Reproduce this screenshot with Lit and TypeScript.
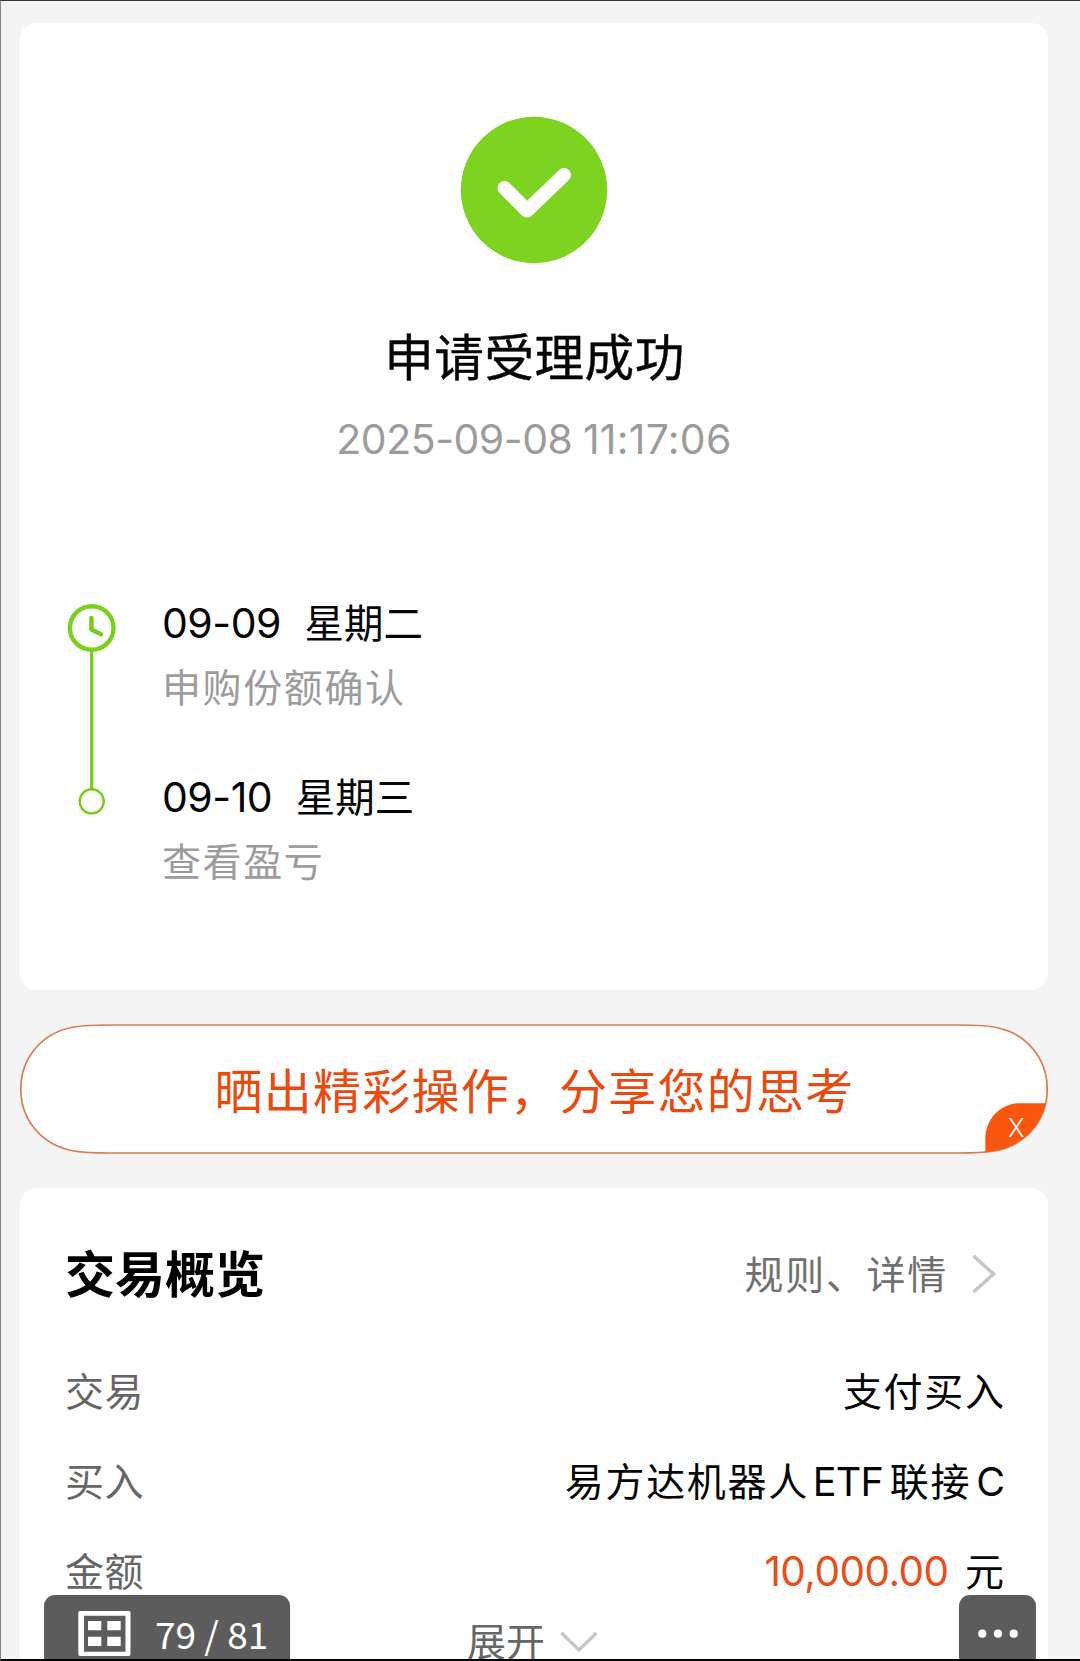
import { LitElement, html, css, svg } from "lit";
import { customElement } from "lit/decorators.js";

const STEPS = [
  { date: "09-09", day: "星期二", note: "申购份额确认" },
  { date: "09-10", day: "星期三", note: "查看盈亏" },
];

const PILL =
  "M90 1C75 1 64 1.3 54 3C22 8.5 .8 34 .8 65S22 121.5 54 127C64 128.7 75 129 90 129H938C953 129 964 128.7 974 127C1006 121.5 1027.2 96 1027.2 65S1006 8.5 974 3C964 1.3 953 1 938 1Z";

@customElement("app-root")
export class AppRoot extends LitElement {
  static styles = css`
    :host {
      display: block;
      font-family: Inter, "Noto Sans CJK SC", sans-serif;
      color: #050505;
    }
    * {
      box-sizing: border-box;
    }
    svg {
      display: block;
      flex: none;
    }
    .page {
      position: relative;
      height: 1661px;
      overflow: hidden;
      background: #f4f4f4;
      border-top: 1px solid #38343a;
      border-left: 1px solid #858585;
      border-bottom: 2px solid #000;
      padding: 22px 32px 0 19px;
      display: flex;
      flex-direction: column;
      white-space: nowrap;
    }
    .card {
      background: #fff;
      border-radius: 17px;
      flex: none;
    }
    .result {
      height: 967px;
      padding-top: 93px;
      display: flex;
      flex-direction: column;
      align-items: center;
    }
    .headline {
      margin-top: 64px;
      padding-left: 1px;
      font-size: 49.6px;
      letter-spacing: 0.5px;
      line-height: 60px;
      -webkit-text-stroke: 0.4px currentColor;
    }
    .time {
      margin-top: 26px;
      display: flex;
      gap: 10.5px;
      font-size: 41px;
      line-height: 50px;
      color: #9c9c9c;
    }
    .ymd {
      letter-spacing: -0.5px;
    }
    .hms {
      letter-spacing: 0.25px;
    }
    .timeline {
      align-self: stretch;
      margin-top: 134px;
      padding-left: 46px;
      display: flex;
      gap: 46px;
    }
    .steps {
      display: flex;
      flex-direction: column;
      gap: 59.5px;
    }
    .when {
      display: flex;
      gap: 23.5px;
      font-size: 41px;
      letter-spacing: -0.5px;
      line-height: 50px;
    }
    .day {
      font-size: 39.5px;
      letter-spacing: 0;
      padding-top: 1px;
      margin-bottom: -1px;
    }
    .note {
      margin-top: 15px;
      margin-bottom: -1px;
      font-size: 39px;
      letter-spacing: 1.6px;
      line-height: 50px;
      color: #9c9c9c;
    }
    .share {
      position: relative;
      flex: none;
      height: 130px;
      margin: 34px 0;
      display: flex;
      align-items: center;
      justify-content: center;
      font-size: 48px;
      letter-spacing: 1.23px;
      line-height: 60px;
      color: #e84a10;
    }
    .outline {
      position: absolute;
      inset: 0;
    }
    .label {
      position: relative;
      padding-top: 5px;
      padding-left: 1px;
    }
    .close {
      position: absolute;
      left: 988px;
      top: 89px;
      font-size: 25px;
      line-height: 30px;
      letter-spacing: 0;
      font-weight: 300;
      color: #fff;
    }
    .overview {
      height: 500px;
      padding: 57px 44px 0 45px;
    }
    .head,
    .row,
    .more,
    .link,
    .value {
      display: flex;
      align-items: center;
    }
    .head,
    .row {
      justify-content: space-between;
    }
    .title {
      font-size: 50px;
      line-height: 60px;
      font-weight: 700;
      color: #000;
    }
    .link {
      gap: 24px;
      padding-right: 8px;
      font-size: 39px;
      letter-spacing: 1.7px;
      line-height: 50px;
      color: #707070;
    }
    .rows {
      margin-top: 61.5px;
      display: flex;
      flex-direction: column;
      gap: 40px;
      font-size: 39px;
      line-height: 50px;
    }
    .name {
      color: #666;
      letter-spacing: 0.4px;
    }
    .value {
      letter-spacing: 1.7px;
      margin-right: -1.7px;
    }
    .latin {
      font-size: 39.5px;
      letter-spacing: -0.7px;
      margin: 0 6.5px 0 3.8px;
    }
    .tail {
      font-size: 39.5px;
      margin: 0 -1px 0 5px;
    }
    .amount {
      font-size: 40.5px;
      letter-spacing: -0.55px;
      color: #e5501c;
      margin-right: 16.5px;
    }
    .more {
      margin-top: 27px;
      padding-left: 402px;
      gap: 15px;
      font-size: 39px;
      line-height: 36px;
      color: #666;
    }
    .dock {
      position: absolute;
      top: 1594px;
      height: 66px;
      background: #5c5c5c;
      border-radius: 11px 11px 0 0;
      display: flex;
      color: #fff;
    }
    .pager {
      left: 43px;
      width: 246px;
      padding: 16px 0 0 34px;
      gap: 24px;
      font-family: "Noto Sans CJK SC", sans-serif;
      font-size: 37px;
      line-height: 44px;
    }
    .menu {
      left: 958px;
      width: 77px;
      justify-content: center;
      padding-top: 34px;
    }
  `;

  render() {
    return html`
      <div class="page">
        <section class="card result">
          <svg width="148" height="148" viewBox="0 0 148 148">
            <circle cx="74" cy="74" r="73.2" fill="#7ed321" />
            <path
              d="M44.5 72L67 94.5L104 59"
              fill="none"
              stroke="#fff"
              stroke-width="14"
              stroke-linecap="round"
              stroke-linejoin="round"
            />
          </svg>
          <div class="headline">申请受理成功</div>
          <div class="time">
            <span class="ymd">2025-09-08</span><span class="hms">11:17:06</span>
          </div>
          <div class="timeline">
            <svg width="50" height="220" viewBox="0 0 50 220">
              <g fill="none" stroke="#76cb1e">
                <path d="M25.7 53V191" stroke-width="3.2" />
                <circle cx="25.7" cy="30" r="21.8" stroke-width="4.4" stroke="#7ad01c" />
                <path
                  d="M25.4 20V31.5L35 36.2"
                  stroke-width="4.4"
                  stroke-linecap="round"
                  stroke-linejoin="round"
                />
                <circle cx="25.7" cy="203.3" r="12" stroke-width="2.5" />
              </g>
            </svg>
            <div class="steps">
              ${STEPS.map(
                (s) => html`<div>
                  <div class="when"><span>${s.date}</span><span class="day">${s.day}</span></div>
                  <div class="note">${s.note}</div>
                </div>`
              )}
            </div>
          </div>
        </section>

        <div class="share">
          <svg class="outline" width="1028" height="130" viewBox="0 0 1028 130">
            <defs><clipPath id="pill"><path d=${PILL} /></clipPath></defs>
            <path d=${PILL} fill="#fff" stroke="#dd7a50" stroke-width="1.7" />
            <path
              clip-path="url(#pill)"
              d="M965.3 130V114C965.3 95 981 79.3 1000 79.3H1028V130Z"
              fill="#fb560f"
            />
          </svg>
          <span class="label">晒出精彩操作，分享您的思考</span>
          <span class="close">X</span>
        </div>

        <section class="card overview">
          <div class="head">
            <span class="title">交易概览</span>
            <span class="link">
              规则、详情
              <svg width="24" height="40" viewBox="0 0 24 40">
                <path d="M1.5 1L21.5 19L1.5 37" fill="none" stroke="#c6c6c6" stroke-width="3.6" />
              </svg>
            </span>
          </div>
          <div class="rows">
            <div class="row"><span class="name">交易</span><span class="value">支付买入</span></div>
            <div class="row">
              <span class="name">买入</span>
              <span class="value"
                >易方达机器人<span class="latin">ETF</span>联接<span class="tail">C</span></span
              >
            </div>
            <div class="row">
              <span class="name">金额</span>
              <span class="value"><span class="amount">10,000.00</span>元</span>
            </div>
          </div>
          <div class="more">
            展开
            <svg width="38" height="22" viewBox="0 0 38 22">
              <path d="M1.5 2L19 19L36.5 2" fill="none" stroke="#c6c6c6" stroke-width="3.4" />
            </svg>
          </div>
        </section>

        <div class="dock pager">
          <svg width="53" height="45" viewBox="0 0 53 45">
            <path
              fill="#fff"
              fill-rule="evenodd"
              d="M2 0H51Q52.500 0 52.500 2V43Q52.500 45 51 45H2Q.3 45 .3 43V2Q.3 0 2 0ZM6 4.700V40.700H47.500V4.700ZM10 10H23.300V19.300H10ZM29.300 10H42.700V19.300H29.300ZM10 25.700H23.300V35H10ZM29.300 25.700H42.700V35H29.300Z"
            />
          </svg>
          <span>79 / 81</span>
        </div>
        <div class="dock menu">
          <svg width="42" height="10" viewBox="0 0 42 10">
            <g fill="#fff">
              ${[5.3, 21, 36.7].map((x) => svg`<circle cx=${x} cy="4.700" r="4.100" />`)}
            </g>
          </svg>
        </div>
      </div>
    `;
  }
}
